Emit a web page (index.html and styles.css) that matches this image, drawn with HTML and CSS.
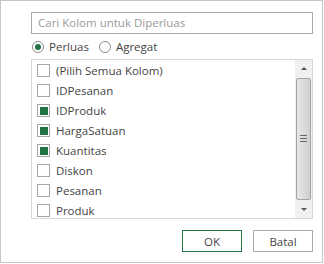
FILE: index.html
```html
<!DOCTYPE html>
<html lang="id">
<head>
  <meta charset="UTF-8">
  <title>Perluas Kolom</title>
  <link rel="stylesheet" href="styles.css">
</head>
<body>
  <div class="frame">
    <input type="text" class="search" placeholder="Cari Kolom untuk Diperluas">

    <div class="mode">
      <label class="radio"><span class="dot on"></span>Perluas</label>
      <label class="radio"><span class="dot"></span>Agregat</label>
    </div>

    <div class="list">
      <div class="items">
        <div class="item"><span class="box"></span>(Pilih Semua Kolom)</div>
        <div class="item"><span class="box"></span>IDPesanan</div>
        <div class="item"><span class="box on"></span>IDProduk</div>
        <div class="item"><span class="box on"></span>HargaSatuan</div>
        <div class="item"><span class="box on"></span>Kuantitas</div>
        <div class="item"><span class="box"></span>Diskon</div>
        <div class="item"><span class="box"></span>Pesanan</div>
        <div class="item"><span class="box"></span>Produk</div>
      </div>
      <div class="scroll">
        <div class="arrow up"></div>
        <div class="thumb"><span class="grip"></span></div>
        <div class="arrow down"></div>
      </div>
    </div>

    <div class="actions">
      <button class="ok">OK</button>
      <button>Batal</button>
    </div>
  </div>
</body>
</html>
```

FILE: styles.css
```css
body {
  margin: 0;
  font-family: "Open Sans", "Noto Sans", sans-serif;
  font-size: 11.5px;
  color: #444;
}
.frame {
  width: 282px;
  height: 240px;
  padding: 11px 9px 10px 30px;
  border: 1px solid #c6c6c6;
  display: flex;
  flex-direction: column;
}
.search {
  box-sizing: border-box;
  width: 282px;
  height: 22px;
  margin: 0;
  padding: 0 6px;
  border: 1px solid #ababab;
  font: inherit;
  color: #444;
  outline: none;
}
.search::placeholder { color: #9a9a9a; }

.mode {
  display: flex;
  align-items: center;
  height: 18px;
  margin-top: 4px;
  gap: 9px;
}
.radio {
  display: flex;
  align-items: center;
  gap: 5px;
}
.dot {
  box-sizing: border-box;
  width: 12px;
  height: 12px;
  border: 1px solid #8c8c8c;
  border-radius: 50%;
  margin-left: 1px;
  display: flex;
  align-items: center;
  justify-content: center;
}
.dot.on::after {
  content: "";
  width: 6px;
  height: 6px;
  border-radius: 50%;
  background: #217346;
}

.list {
  box-sizing: border-box;
  height: 161px;
  margin-top: 3px;
  border: 1px solid #d6d6d6;
  display: flex;
  overflow: hidden;
}
.items {
  flex: 1;
  padding-top: 1px;
}
.item {
  height: 20px;
  display: flex;
  align-items: center;
  padding-left: 5px;
  gap: 6px;
  white-space: nowrap;
}
.box {
  box-sizing: border-box;
  width: 13px;
  height: 13px;
  border: 1px solid #a6a6a6;
  background: #fff;
  display: flex;
  align-items: center;
  justify-content: center;
}
.box.on::after {
  content: "";
  width: 8px;
  height: 8px;
  background: #217346;
}

.scroll {
  width: 17px;
  background: #f0f0f0;
  display: flex;
  flex-direction: column;
}
.arrow {
  height: 17px;
  display: flex;
  align-items: center;
  justify-content: center;
}
.arrow::after {
  content: "";
  border-left: 3px solid transparent;
  border-right: 3px solid transparent;
}
.arrow.up::after { border-bottom: 3px solid #555; }
.arrow.down::after { border-top: 3px solid #555; }
.thumb {
  box-sizing: border-box;
  flex: 1;
  margin: 1px 1px;
  border: 1px solid #a3a3a3;
  border-radius: 2px;
  background: linear-gradient(to right, #e6e6e6, #dcdcdc 50%, #d0d0d0);
  display: flex;
  align-items: center;
  justify-content: center;
}
.grip {
  width: 7px;
  height: 7px;
  background: repeating-linear-gradient(to bottom, #666 0 1px, transparent 1px 3px);
}

.actions {
  display: flex;
  justify-content: flex-end;
  gap: 11px;
  margin-top: 11px;
}
button {
  width: 60px;
  height: 22px;
  margin: 0;
  padding: 0;
  border: 1px solid #ababab;
  background: #fff;
  font: inherit;
  color: #444;
}
button.ok { border-color: #217346; }
```
